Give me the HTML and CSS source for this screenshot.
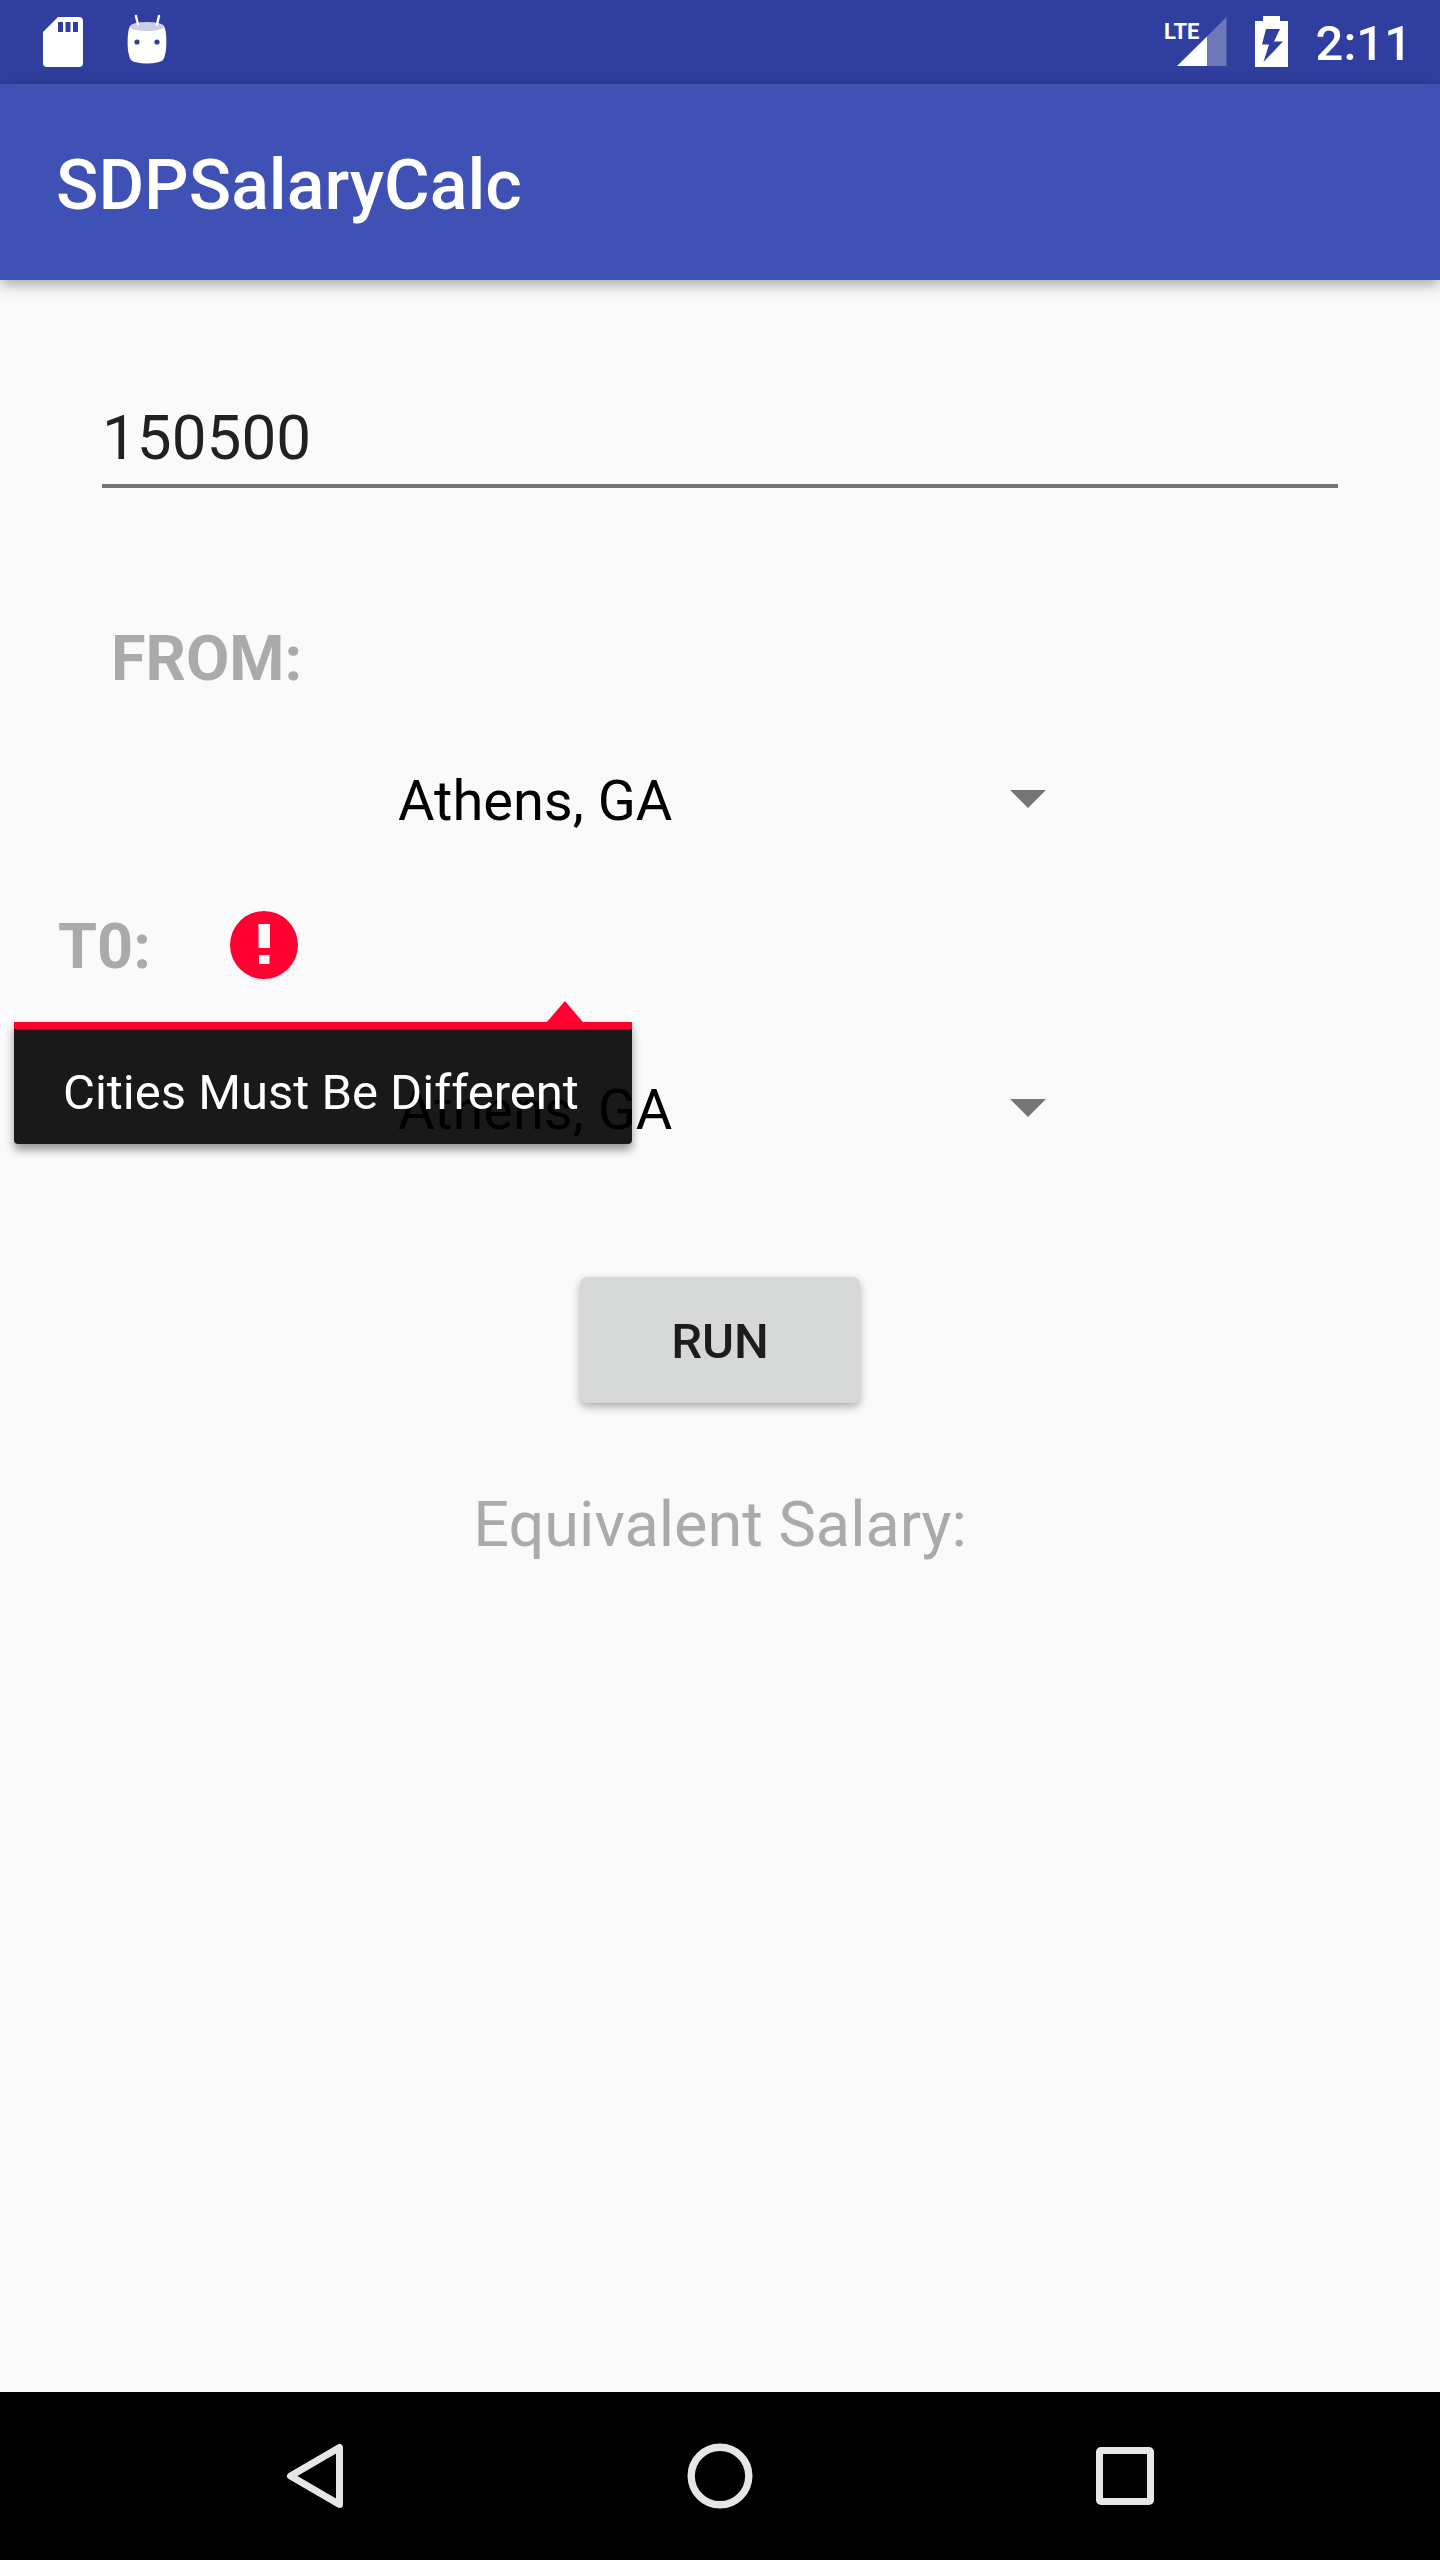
FILE: index.html
```html
<!DOCTYPE html>
<html lang="en">
<head>
<meta charset="utf-8">
<meta name="viewport" content="width=device-width, initial-scale=1">
<title>SDPSalaryCalc</title>
<link rel="stylesheet" href="styles.css">
</head>
<body>
<div class="status-bar">
  <div class="status-group status-left">
    <svg width="40" height="50" viewBox="0 0 40 50" aria-hidden="true">
      <path fill="#fff" fill-rule="evenodd" d="M15 0H36a4 4 0 0 1 4 4V46a4 4 0 0 1-4 4H4a4 4 0 0 1-4-4V15ZM15 5V15H20V5ZM22.500 5V15H27.500V5ZM30 5V15H35V5Z"/>
    </svg>
    <svg width="40" height="50" viewBox="0 0 40 50" aria-hidden="true">
      <path fill="#fff" d="M3 9C0 14 0 32 2 38C3 42 4 44 8 45C16 47 24 47 32 45C36 44 37 42 38 38C40 32 40 14 37 9Z"/>
      <ellipse cx="20" cy="9.500" rx="17" ry="4.500" fill="#c9cde5"/>
      <path d="M9 -1L11 7.500M32 -1L30 7.500" stroke="#fff" stroke-width="2.400" stroke-linecap="round"/>
      <circle cx="10" cy="25" r="2.600" fill="#303f9f"/>
      <circle cx="30" cy="25" r="2.600" fill="#303f9f"/>
    </svg>
  </div>
  <div class="status-group status-right">
    <svg width="64" height="52" viewBox="0 0 64 52" role="img" aria-label="LTE signal">
      <path fill="#fff" fill-opacity=".3" d="M44 20.500L63.500 1V50H44Z"/>
      <path fill="#fff" d="M14 50L44 20.500V50Z"/>
      <text class="lte" x="1" y="23">LTE</text>
    </svg>
    <svg width="33" height="52" viewBox="0 0 33 52" aria-hidden="true">
      <path fill="#fff" fill-rule="evenodd" d="M8 0H25V5H33V51H0V5H8ZM11 13L7 28.500H14L8.500 46L28 25.500H19L25 13Z"/>
    </svg>
    <span class="clock">2:11</span>
  </div>
</div>
<header class="app-bar">
  <h1 class="app-title">SDPSalaryCalc</h1>
</header>
<main class="content">
  <form class="calc">
    <input class="salary" type="text" inputmode="numeric" value="150500" aria-label="Salary">
    <label class="field-label from-label" for="from-city">FROM:</label>
    <div class="spinner">
      <select class="spinner-select" id="from-city"><option selected>Athens, GA</option></select>
    </div>
    <div class="to-row">
      <label class="field-label" for="to-city">T0:</label>
      <svg width="70" height="70" viewBox="0 0 70 70" aria-hidden="true">
        <circle cx="35" cy="35" r="34" fill="#ff0030"/>
        <path fill="#fafafa" d="M29.500 14H41V38H29.500ZM30 45H40.500V54H30Z"/>
      </svg>
      <div class="error-popup" id="to-error" role="alert">Cities Must Be Different</div>
    </div>
    <div class="spinner spinner-to">
      <select class="spinner-select" id="to-city" aria-describedby="to-error"><option selected>Athens, GA</option></select>
    </div>
    <button class="run" type="button">RUN</button>
    <output class="result">Equivalent Salary:</output>
  </form>
</main>
<nav class="nav-bar" aria-label="System">
  <button class="nav-button" type="button" aria-label="Back">
    <svg width="66" height="66" viewBox="0 0 66 66"><path fill="none" stroke="#e6e6e6" stroke-width="7" stroke-linejoin="round" d="M8.500 33L57.500 4.500V61.500Z"/></svg>
  </button>
  <button class="nav-button" type="button" aria-label="Home">
    <svg width="66" height="66" viewBox="0 0 66 66"><circle cx="33" cy="33" r="28.800" fill="none" stroke="#e6e6e6" stroke-width="7.400"/></svg>
  </button>
  <button class="nav-button" type="button" aria-label="Overview">
    <svg width="66" height="66" viewBox="0 0 66 66"><path fill="#e6e6e6" fill-rule="evenodd" d="M9 4H57a5 5 0 0 1 5 5V57a5 5 0 0 1-5 5H9a5 5 0 0 1-5-5V9a5 5 0 0 1 5-5ZM11 11V55H55V11Z"/></svg>
  </button>
</nav>
</body>
</html>
```
FILE: styles.css
```css
* {
  box-sizing: border-box;
}

body {
  margin: 0;
  min-height: 100vh;
  display: flex;
  flex-direction: column;
  background: #fafafa;
  color: #212121;
  font-family: Roboto, "Liberation Sans", sans-serif;
}

svg {
  display: block;
  flex: none;
  overflow: visible;
}

/* Status bar */
.status-bar {
  display: flex;
  justify-content: space-between;
  align-items: center;
  height: 84px;
  padding: 0 28px 0 43px;
  background: #303f9f;
  color: #fff;
}

.status-group {
  display: flex;
  align-items: center;
}

.status-left {
  gap: 44px;
}

.status-right {
  gap: 28px;
}

.lte {
  fill: #fff;
  font-family: "Liberation Sans Narrow", Roboto, sans-serif;
  font-size: 22px;
  font-weight: 700;
}

.clock {
  padding-top: 4px;
  font-size: 49px;
  line-height: 58px;
  font-weight: 500;
}

/* App bar */
.app-bar {
  position: relative;
  display: flex;
  align-items: center;
  height: 196px;
  padding: 6px 56px 0;
  background: #3f51b5;
  box-shadow: 0 4px 14px rgba(0, 0, 0, .36);
}

.app-title {
  margin: 0;
  color: #fff;
  font-size: 70px;
  line-height: 82px;
  font-weight: 500;
}

/* Form */
.content {
  flex: 1;
  padding-top: 120px;
}

.calc {
  display: flex;
  flex-direction: column;
}

.salary {
  margin: 0 102px;
  padding: 0 0 10px;
  height: 88px;
  border: 0;
  border-bottom: 4px solid #757575;
  border-radius: 0;
  outline: 0;
  background: transparent;
  color: #212121;
  font: 400 62px/74px Roboto, "Liberation Sans", sans-serif;
}

.field-label {
  color: #aaa;
  font-size: 63px;
  line-height: 74px;
  font-weight: 700;
}

.from-label {
  margin: 134px 0 72px 111px;
}

.spinner {
  display: grid;
  align-items: center;
  align-self: center;
  width: 700px;
  max-width: 100%;
}

.spinner::after {
  content: "";
  grid-area: 1 / 1;
  justify-self: end;
  width: 36px;
  height: 18px;
  margin: 0 24px 4px 0;
  background: #757575;
  clip-path: polygon(0 0, 100% 0, 50% 100%);
  pointer-events: none;
}

.spinner-select {
  grid-area: 1 / 1;
  width: 100%;
  height: 66px;
  padding: 0 84px 0 28px;
  border: 0;
  outline: 0;
  appearance: none;
  background: transparent;
  color: #000;
  font: 400 56px/66px Roboto, "Liberation Sans", sans-serif;
}

.to-row {
  position: relative;
  z-index: 1;
  display: flex;
  gap: 78px;
  margin: 76px 58px 93px;
}

/* Error message hanging below the second label */
.error-popup {
  position: absolute;
  top: 112px;
  left: -44px;
  padding: 38px 53px 26px 49px;
  border-top: 7px solid #ff0030;
  border-radius: 0 0 4px 4px;
  background: rgba(0, 0, 0, .9);
  background-clip: padding-box;
  box-shadow: 0 6px 10px rgba(0, 0, 0, .4);
  color: #fff;
  font-size: 49px;
  line-height: 51px;
  white-space: nowrap;
}

.error-popup::before {
  content: "";
  position: absolute;
  top: -28px;
  right: 49px;
  width: 36px;
  height: 21px;
  background: #ff0030;
  clip-path: polygon(50% 0, 100% 100%, 0 100%);
}

.run {
  align-self: center;
  width: 280px;
  height: 126px;
  margin: 134px 0 85px;
  padding: 4px 0 0;
  border: 0;
  border-radius: 7px;
  background: #d6d7d7;
  box-shadow: 0 4px 8px rgba(0, 0, 0, .3);
  color: #1c1c1c;
  font: 500 49px/58px Roboto, "Liberation Sans", sans-serif;
}

.result {
  color: #aaa;
  font-size: 63px;
  line-height: 74px;
  text-align: center;
}

/* System navigation */
.nav-bar {
  display: grid;
  grid-template-columns: repeat(3, 1fr);
  height: 168px;
  padding: 0 112px;
  background: #000;
}

.nav-button {
  display: flex;
  align-items: center;
  justify-content: center;
  padding: 0;
  border: 0;
  background: transparent;
}
```
